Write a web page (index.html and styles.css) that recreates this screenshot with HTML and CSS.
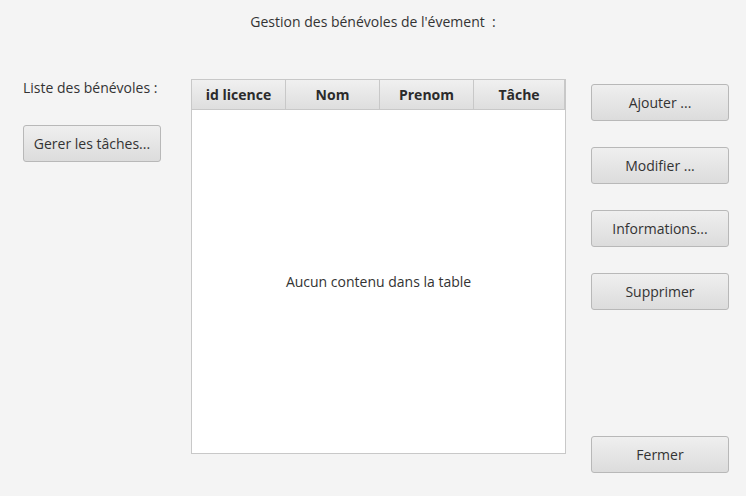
FILE: index.html
```html
<!DOCTYPE html>
<html lang="fr">
<head>
<meta charset="utf-8">
<title>Gestion des bénévoles</title>
<link rel="stylesheet" href="styles.css">
</head>
<body>
<div class="window">
  <div class="title">Gestion des bénévoles de l'évement&nbsp; :</div>
  <div class="main">
    <div class="left">
      <div class="label">Liste des bénévoles :</div>
      <button class="btn">Gerer les tâches...</button>
    </div>
    <div class="table">
      <div class="thead">
        <div class="th c1">id licence</div>
        <div class="th c2">Nom</div>
        <div class="th c3">Prenom</div>
        <div class="th c4">Tâche</div>
        <div class="th filler"></div>
      </div>
      <div class="tbody">Aucun contenu dans la table</div>
    </div>
    <div class="right">
      <button class="btn">Ajouter ...</button>
      <button class="btn">Modifier ...</button>
      <button class="btn">Informations...</button>
      <button class="btn">Supprimer</button>
      <button class="btn last">Fermer</button>
    </div>
  </div>
</div>
</body>
</html>
```
FILE: styles.css
```css
html, body {
  margin: 0;
  padding: 0;
}
body {
  background: #f4f4f4;
  font-family: "Open Sans", "Noto Sans", sans-serif;
  font-size: 14px;
  color: #333333;
}
.window {
  width: 746px;
  height: 496px;
  display: flex;
  flex-direction: column;
}
.title {
  height: 44px;
  line-height: 44px;
  text-align: center;
}
.main {
  display: flex;
  margin-top: 35px;
  padding-left: 23px;
}
.left {
  width: 138px;
  display: flex;
  flex-direction: column;
}
.label {
  line-height: 18px;
}
.left .btn {
  margin-top: 28px;
}
.btn {
  width: 138px;
  height: 37px;
  border: 1px solid #b8b8b8;
  border-radius: 3px;
  background: linear-gradient(#efefef, #dcdcdc);
  font-family: inherit;
  font-size: 14px;
  color: #333333;
  padding: 0;
  box-sizing: border-box;
}
.table {
  margin-left: 30px;
  width: 375px;
  height: 375px;
  box-sizing: border-box;
  border: 1px solid #c8c8c8;
  background: #ffffff;
  display: flex;
  flex-direction: column;
}
.thead {
  display: flex;
  height: 30px;
  background: linear-gradient(#f0f0f0, #dedede);
  border-bottom: 1px solid #c8c8c8;
  box-sizing: border-box;
}
.th {
  width: 94px;
  box-sizing: border-box;
  border-right: 1px solid #c8c8c8;
  text-align: center;
  font-weight: bold;
  line-height: 29px;
  font-size: 14px;
  color: #2b2b2b;
}
.th.c4 {
  width: 91px;
}
.th.filler {
  flex: 1;
  border-right: none;
  background: #f2f2f2;
}
.tbody {
  flex: 1;
  display: flex;
  align-items: center;
  justify-content: center;
}
.right {
  margin-left: 25px;
  margin-top: 5px;
  height: 389px;
  display: flex;
  flex-direction: column;
  gap: 26px;
}
.right .last {
  margin-top: auto;
}
```
